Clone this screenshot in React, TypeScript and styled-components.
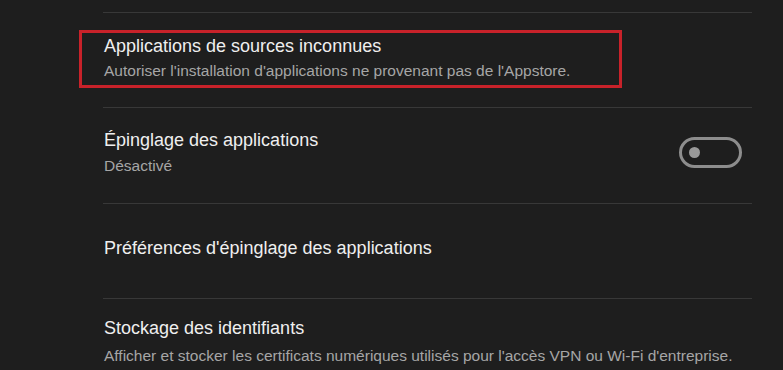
import React from "react";
import styled, { createGlobalStyle } from "styled-components";

const Global = createGlobalStyle`
  html, body { margin: 0; padding: 0; background: #1e1e1e; }
  body { font-family: "Liberation Sans", Arial, sans-serif; }
`;

const Page = styled.div`
  width: 783px;
  height: 370px;
  overflow: hidden;
  background: #1e1e1e;
  padding: 12px 31px 0 103px;
  box-sizing: border-box;
`;

const List = styled.div`
  display: flex;
  flex-direction: column;
  border-top: 1px solid #383838;
`;

const Row = styled.div<{ $h: number; $pt: number }>`
  position: relative;
  flex: 0 0 auto;
  height: ${(p) => p.$h}px;
  padding-top: ${(p) => p.$pt}px;
  display: flex;
  align-items: flex-start;
  justify-content: space-between;
  border-bottom: 1px solid #383838;
  box-sizing: border-box;
`;

const Texts = styled.div<{ $gap?: number }>`
  display: flex;
  flex-direction: column;
  gap: ${(p) => p.$gap ?? 4}px;
`;

const Title = styled.div`
  color: #efefef;
  font-size: 18px;
  line-height: 22px;
  padding-left: 1px;
`;

const Sub = styled.div`
  color: #a6a6a6;
  font-size: 15.5px;
  line-height: 19px;
  padding-left: 1px;
`;

const Highlight = styled.div`
  position: absolute;
  left: -24px;
  top: 17px;
  width: 543px;
  height: 58px;
  border: 3px solid #c8222a;
  box-sizing: border-box;
  pointer-events: none;
`;

const Toggle = styled.div`
  width: 63px;
  height: 31px;
  margin-top: 8px;
  margin-right: 10px;
  border: 3px solid #8d8d8d;
  border-radius: 16px;
  box-sizing: border-box;
  display: flex;
  align-items: center;
  padding-left: 7px;
`;

const Knob = styled.div`
  width: 11px;
  height: 11px;
  border-radius: 50%;
  background: #999999;
`;

export default function App() {
  return (
    <>
      <Global />
      <Page>
        <List>
          <Row $h={95} $pt={22}>
            <Texts $gap={4}>
              <Title>Applications de sources inconnues</Title>
              <Sub>Autoriser l'installation d'applications ne provenant pas de l'Appstore.</Sub>
            </Texts>
            <Highlight />
          </Row>
          <Row $h={96} $pt={21}>
            <Texts $gap={5}>
              <Title>Épinglage des applications</Title>
              <Sub>Désactivé</Sub>
            </Texts>
            <Toggle>
              <Knob />
            </Toggle>
          </Row>
          <Row $h={95} $pt={33}>
            <Texts>
              <Title>Préférences d'épinglage des applications</Title>
            </Texts>
          </Row>
          <Row $h={95} $pt={18}>
            <Texts $gap={7}>
              <Title>Stockage des identifiants</Title>
              <Sub>Afficher et stocker les certificats numériques utilisés pour l'accès VPN ou Wi-Fi d'entreprise.</Sub>
            </Texts>
          </Row>
        </List>
      </Page>
    </>
  );
}
